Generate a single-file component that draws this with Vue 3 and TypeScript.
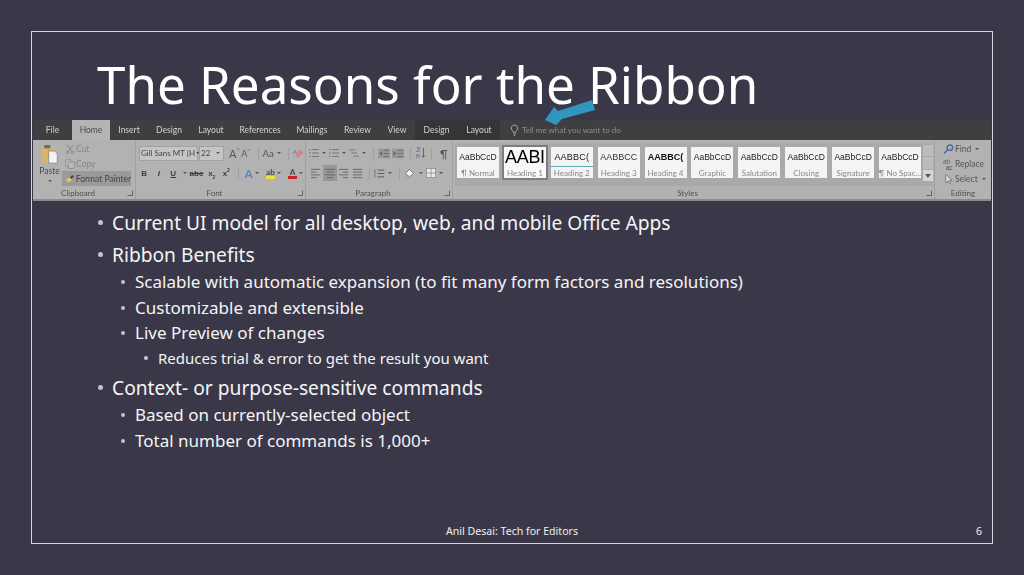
<script setup lang="ts">
const tabs = [
  { t: 'File', w: 39, cls: '' },
  { t: 'Home', w: 38, cls: 'active' },
  { t: 'Insert', w: 38, cls: '' },
  { t: 'Design', w: 42, cls: '' },
  { t: 'Layout', w: 42, cls: '' },
  { t: 'References', w: 56, cls: '' },
  { t: 'Mailings', w: 48, cls: '' },
  { t: 'Review', w: 43, cls: '' },
  { t: 'View', w: 36, cls: '' },
  { t: 'Design', w: 43, cls: 'ctx' },
  { t: 'Layout', w: 42, cls: 'ctx' },
]
const styles = [
  { s: 'AaBbCcD', l: '¶ Normal', c: 'n' },
  { s: 'AABI', l: 'Heading 1', c: 'h1' },
  { s: 'AABBC(', l: 'Heading 2', c: 'h2' },
  { s: 'AABBCC', l: 'Heading 3', c: 'h3' },
  { s: 'AABBC(', l: 'Heading 4', c: 'h4' },
  { s: 'AaBbCcD', l: 'Graphic', c: 'n' },
  { s: 'AaBbCcD', l: 'Salutation', c: 'n' },
  { s: 'AaBbCcD', l: 'Closing', c: 'n' },
  { s: 'AaBbCcD', l: 'Signature', c: 'n' },
  { s: 'AaBbCcD', l: '¶ No Spac...', c: 'n' },
]
const items = [
  { t: 'Current UI model for all desktop, web, and mobile Office Apps', l: 1 },
  { t: 'Ribbon Benefits', l: 1 },
  { t: 'Scalable with automatic expansion (to fit many form factors and resolutions)', l: 2 },
  { t: 'Customizable and extensible', l: 2 },
  { t: 'Live Preview of changes', l: 2 },
  { t: 'Reduces trial & error to get the result you want', l: 3 },
  { t: 'Context- or purpose-sensitive commands', l: 1 },
  { t: 'Based on currently-selected object', l: 2 },
  { t: 'Total number of commands is 1,000+', l: 2 },
]
const aligns = [
  'M1 2h10M1 5h6M1 8h10M1 11h6',
  'M1 2h11M3 5h7M1 8h11M3 11h7',
  'M1 2h10M5 5h6M1 8h10M5 11h6',
  'M1 2h10M1 5h10M1 8h10M1 11h10',
]
</script>

<template>
  <div class="slide">
    <div class="frame">
      <h1 class="title">The Reasons for the Ribbon</h1>
      <div class="ribbon">
        <div class="tabs">
          <span v-for="(x, i) in tabs" :key="i" class="tab" :class="x.cls" :style="{ width: x.w + 'px' }">{{ x.t }}</span>
          <span class="tell">
            <svg width="9" height="12" viewBox="0 0 9 12" fill="none" stroke="#a8a8a8" stroke-width="1"><path d="M4.500 1a3.200 3.200 0 0 0-2 5.700c.5.500.6 1 .6 1.600h2.800c0-.6.100-1.100.6-1.600a3.200 3.200 0 0 0-2-5.700zM3.300 10h2.400M3.800 11.300h1.400" /></svg>
            Tell me what you want to do
          </span>
        </div>
        <div class="body">
          <section class="group clip">
            <div class="gmain clipmain">
              <div class="paste">
                <svg width="19" height="21" viewBox="0 0 22 24">
                  <rect x="1" y="3" width="15" height="19" rx="1" fill="#d9b36a" />
                  <rect x="5" y="1" width="7" height="4" fill="#6e6e6e" />
                  <path d="M10 8h7l3 3v11H10z" fill="#f4f4f4" stroke="#777" stroke-width=".8" />
                </svg>
                <span>Paste</span>
                <i class="caret"></i>
              </div>
              <div class="cliprows">
                <div class="crow dim">
                  <svg width="10" height="12" viewBox="0 0 12 12" fill="none" stroke="#808080" stroke-width="1.100"><path d="M2 1l6 7M10 1L4 8" /><circle cx="3" cy="10" r="1.500" /><circle cx="9" cy="10" r="1.500" /></svg>
                  Cut
                </div>
                <div class="crow dim">
                  <svg width="10" height="12" viewBox="0 0 12 12" fill="#bbb" stroke="#808080" stroke-width=".8"><rect x="1" y="1" width="6" height="8" /><rect x="4.500" y="3.500" width="6.500" height="8" /></svg>
                  Copy
                </div>
                <div class="crow fp">
                  <svg width="10" height="12" viewBox="0 0 12 12"><path d="M1 7l5-3 3 3-5 4z" fill="#e0c070" /><path d="M6 4l3-3 2 2-3 3z" fill="#444" /></svg>
                  Format Painter
                </div>
              </div>
            </div>
            <div class="glabel">Clipboard<i class="launch"></i></div>
          </section>

          <section class="group font">
            <div class="gmain rows">
              <div class="frow">
                <span class="combo fname">Gill Sans MT (H<i class="caret"></i></span>
                <span class="combo fsize">22<i class="caret"></i></span>
                <span class="gly big">A<sup>^</sup></span>
                <span class="gly mid">A<sup>˅</sup></span>
                <i class="sep"></i>
                <span class="gly aa">Aa<i class="caret"></i></span>
                <i class="sep"></i>
                <svg width="14" height="13" viewBox="0 0 14 13"><path d="M3 9L8 2l4 3-5 6H4z" fill="#d9808a" /><text x="0" y="7" font-size="7" fill="#5b6f9c" font-family="Liberation Sans">A</text></svg>
              </div>
              <div class="frow second">
                <b class="fmt">B</b><em class="fmt">I</em><u class="fmt">U</u><i class="caret"></i>
                <s class="fmt abc">abc</s>
                <span class="fmt">x<sub>2</sub></span>
                <span class="fmt">x<sup>2</sup></span>
                <i class="sep"></i>
                <span class="gly effect">A</span><i class="caret"></i>
                <span class="hl yellow">ab</span><i class="caret"></i>
                <span class="hl red">A</span><i class="caret"></i>
              </div>
            </div>
            <div class="glabel">Font<i class="launch"></i></div>
          </section>

          <section class="group para">
            <div class="gmain rows">
              <div class="frow p1">
                <svg width="10" height="12" viewBox="0 0 13 13" stroke="#5a6f9a" fill="none" stroke-width="1.300"><path d="M4 2h9M4 6.500h9M4 11h9" stroke="#777" /><path d="M0 2h2M0 6.500h2M0 11h2" /></svg><i class="caret"></i>
                <svg width="10" height="12" viewBox="0 0 13 13" stroke="#5a6f9a" fill="none" stroke-width="1.300"><path d="M4 2h9M4 6.500h9M4 11h9" stroke="#777" /><path d="M0 2h2M0 6.500h2M0 11h2" /></svg><i class="caret"></i>
                <svg width="10" height="12" viewBox="0 0 14 13" stroke="#777" fill="none" stroke-width="1.300"><path d="M0 2h9M3 6.500h8M6 11h8" /></svg><i class="caret"></i>
                <i class="sep"></i>
                <svg class="ind" width="12" height="11" viewBox="0 0 15 12"><rect width="15" height="12" fill="#999" /><path d="M7 2h7M7 6h7M7 10h7" stroke="#666" /><path d="M5 3L2 6l3 3z" fill="#45639a" /></svg>
                <svg class="ind" width="12" height="11" viewBox="0 0 15 12"><rect width="15" height="12" fill="#999" /><path d="M7 2h7M7 6h7M7 10h7" stroke="#666" /><path d="M2 3l3 3-3 3z" fill="#45639a" /></svg>
                <i class="sep"></i>
                <svg width="11" height="14" viewBox="0 0 13 14" fill="none" stroke="#555" stroke-width="1"><path d="M10 1v11M8 10l2 2 2-2" /><path d="M2 1h4l-4 4h4M2 13V9h3v4" stroke="#5a6f9a" /></svg>
                <i class="sep wide"></i>
                <span class="pil">¶</span>
              </div>
              <div class="frow p2">
                <span v-for="(d, i) in aligns" :key="i" class="al" :class="{ on: i === 1 }">
                  <svg width="12" height="13" viewBox="0 0 13 13" fill="none" stroke="#666" stroke-width="1"><path :d="d" /></svg>
                </span>
                <i class="sep"></i>
                <svg width="12" height="13" viewBox="0 0 16 13" fill="none" stroke="#555" stroke-width="1.200"><path d="M6 2h9M6 6.500h9M6 11h9" /><path d="M2.500 1v11" stroke="#5a6f9a" /></svg><i class="caret"></i>
                <i class="sep"></i>
                <svg width="13" height="13" viewBox="0 0 16 14"><path d="M3 7l5-5 5 5-5 4z" fill="#f2f2f2" stroke="#666" /><path d="M1 12h9" stroke="#a8a8a8" stroke-width="2" /></svg><i class="caret"></i>
                <svg width="10" height="10" viewBox="0 0 13 13" fill="#e9e9e9" stroke="#8a8a8a"><rect x=".5" y=".5" width="12" height="12" /><path d="M6.500 .5v12M.5 6.500h12" /></svg><i class="caret"></i>
              </div>
            </div>
            <div class="glabel">Paragraph<i class="launch"></i></div>
          </section>

          <section class="group stylesg">
            <div class="gallery">
              <div v-for="(s, i) in styles" :key="i" class="card" :class="{ sel: s.c === 'h1' }">
                <span class="sample" :class="s.c">{{ s.s }}</span>
                <span class="clabel">{{ s.l }}</span>
              </div>
              <div class="scroller">
                <span></span><span></span><span class="more"></span>
              </div>
            </div>
            <div class="glabel">Styles<i class="launch"></i></div>
          </section>

          <section class="group edit">
            <div class="gmain erows">
              <div class="erow">
                <svg width="11" height="12" viewBox="0 0 12 12" fill="none" stroke="#3e66a8" stroke-width="1.500"><circle cx="7.500" cy="4.500" r="3" /><path d="M5 7l-4 4" /></svg>
                Find<i class="caret"></i>
              </div>
              <div class="erow">
                <svg width="11" height="12" viewBox="0 0 12 12"><text x="0" y="6" font-size="7" fill="#3e66a8" font-family="Liberation Sans">ab</text><text x="3" y="12" font-size="7" fill="#555" font-family="Liberation Sans">ac</text></svg>
                Replace
              </div>
              <div class="erow">
                <svg width="11" height="12" viewBox="0 0 12 12" fill="#ddd" stroke="#666" stroke-width=".8"><path d="M3 1v9l2.500-2 1.500 3 1.500-.8L7 7.400h3z" /></svg>
                Select<i class="caret"></i>
              </div>
            </div>
            <div class="glabel editl">Editing</div>
          </section>
        </div>
      </div>

      <ul class="bullets">
        <li v-for="(it, i) in items" :key="i" :class="'lv' + it.l">{{ it.t }}</li>
      </ul>

      <footer class="foot">
        <span></span>
        <span class="center">Anil Desai: Tech for Editors</span>
        <span class="num">6</span>
      </footer>

      <svg class="arrow" width="52" height="26" viewBox="0 0 52 26">
        <path d="M0 20L9 7l4 4L47 0l3 10-33 9-6 6z" fill="#2f97bd" />
      </svg>
    </div>
  </div>
</template>

<style>
html, body { margin: 0; background: #3a3848; }
</style>

<style scoped>
.slide {
  width: 1024px;
  height: 575px;
  box-sizing: border-box;
  padding: 31px;
  background: #3a3848;
  font-family: "Noto Sans", "Open Sans", sans-serif;
  color: #fff;
  overflow: hidden;
}
.frame {
  position: relative;
  height: 513px;
  box-sizing: border-box;
  border: 1px solid #d6d6da;
  display: flex;
  flex-direction: column;
}
.title {
  margin: 0;
  height: 88px;
  padding: 17px 0 0 65px;
  box-sizing: border-box;
  font-size: 51.100px;
  line-height: 70px;
  font-weight: 400;
  white-space: nowrap;
}
.ribbon {
  margin: 0 0 0 1px;
  width: 958px;
  height: 81px;
  font-family: Lato, "Open Sans", sans-serif;
  color: #4a4a4a;
  filter: blur(0.4px);
  display: flex;
  flex-direction: column;
  overflow: hidden;
  flex: none;
}
.tabs {
  height: 20px;
  background: #3f3f41;
  display: flex;
  align-items: center;
  font-size: 8.500px;
  color: #d2d2d2;
}
.tab {
  height: 20px;
  line-height: 21px;
  text-align: center;
  flex: none;
}
.tab.active {
  background: #b4b4b4;
  color: #4c4c4c;
}
.tab.ctx {
  background: #353537;
}
.tell {
  margin-left: 10px;
  display: flex;
  align-items: center;
  gap: 3px;
  font-size: 8px;
  color: #8d8d8d;
}
.body {
  height: 61px;
  box-sizing: border-box;
  background: #b2b2b2;
  border-bottom: 2px solid #8c8c8c;
  display: flex;
}
.group {
  position: relative;
  box-sizing: border-box;
  border-right: 1px solid #a0a0a0;
  flex: none;
  display: flex;
  flex-direction: column;
}
.clip { width: 103px; }
.font { width: 170px; }
.para { width: 147px; }
.stylesg { width: 482px; }
.edit { width: 56px; border-right: 0; }
.gmain { flex: 1; min-height: 0; }
.glabel {
  position: relative;
  height: 13px;
  line-height: 14px;
  font-size: 8px;
  text-align: center;
  color: #4f4f4f;
  padding-right: 12px;
  box-sizing: border-box;
}
.editl { padding-right: 0; }
.launch {
  position: absolute;
  right: 2px;
  top: 4px;
  width: 4px;
  height: 4px;
  border: 1px solid #666;
  border-top-color: transparent;
  border-left-color: transparent;
}
.caret {
  display: inline-block;
  width: 0;
  height: 0;
  border: 2px solid transparent;
  border-top: 2.500px solid #555;
  border-bottom: 0;
  margin: 0 3px;
  flex: none;
}
.clipmain {
  display: flex;
  padding: 1px 0 0 7px;
}
.paste {
  width: 19px;
  padding-top: 3px;
  display: flex;
  flex-direction: column;
  align-items: center;
  font-size: 8.500px;
  line-height: 10px;
  gap: 1px;
}
.paste .caret { margin-top: 3px; }
.cliprows {
  display: flex;
  flex-direction: column;
  margin-left: 3px;
}
.crow {
  width: 69px;
  box-sizing: border-box;
  height: 15px;
  display: flex;
  align-items: center;
  gap: 1px;
  padding: 0 0 0 3px;
  font-size: 8.500px;
  white-space: nowrap;
}
.dim { color: #858585; }
.fp { background: #9a9a9a; color: #444; }
.rows {
  display: flex;
  flex-direction: column;
  padding: 5px 0 0 3px;
  gap: 4px;
}
.frow {
  height: 16px;
  display: flex;
  align-items: center;
  white-space: nowrap;
}
.combo {
  box-sizing: border-box;
  height: 15px;
  background: #c5c5c5;
  border: 1px solid #a2a2a2;
  display: flex;
  align-items: center;
  justify-content: space-between;
  padding-left: 1px;
  font-size: 8px;
  color: #444;
}
.fname { width: 59px; margin-right: 1px; }
.fname .caret { margin: 0 1px; }
.fsize { width: 28px; margin-right: 5px; }
.gly { color: #555; font-size: 11px; display: flex; align-items: center; }
.big { width: 14px; font-size: 11px; }
.mid { width: 14px; font-size: 9px; }
.gly sup { font-size: 6px; line-height: 6px; align-self: flex-start; color: #3e66a8; }
.sep {
  width: 1px;
  height: 13px;
  margin: 0 4px;
  background: #a0a0a0;
  flex: none;
}
.sep.wide { margin: 0 8px 0 5px; }
.aa { font-size: 9.500px; }
.second { margin-left: -2px; }
.fmt {
  width: 14.500px;
  text-align: center;
  font-size: 8px;
  color: #3f3f3f;
  font-family: "Liberation Sans", sans-serif;
  font-weight: 700;
  flex: none;
}
.fmt sub, .fmt sup { font-size: 5px; line-height: 0; }
.abc { width: 16px; }
.second .caret { margin: 0 2px; }
.effect { color: #5b86c4; font-size: 12px; font-weight: 700; margin-left: 2px; }
.hl {
  display: inline-block;
  width: 11px;
  height: 11px;
  margin-left: 5px;
  font-size: 8px;
  line-height: 9px;
  text-align: center;
  font-weight: 700;
  color: #444;
  box-sizing: border-box;
}
.yellow { border-bottom: 3px solid #e8e23a; }
.red { border-bottom: 3px solid #c82222; }
.p1 .caret { margin: 0 3px; }
.ind { margin-right: 2px; }
.pil { font-size: 11px; color: #555; }
.p2 { padding-left: 0; }
.al {
  width: 14px;
  height: 16px;
  display: flex;
  align-items: center;
  justify-content: center;
  flex: none;
}
.al.on { background: #979797; }
.p2 .caret { margin: 0 3px; }
.p2 .sep { margin: 0 3px 0 4px; }
.gallery {
  position: relative;
  flex: 1;
  box-sizing: border-box;
  margin: 3px 1px 0 2px;
  padding: 4px 0 0 2px;
  background: #a9a9a9;
  display: flex;
  gap: 4.900px;
}
.card {
  box-sizing: border-box;
  width: 42px;
  height: 31px;
  background: #f4f4f4;
  display: flex;
  flex-direction: column;
  align-items: center;
  overflow: hidden;
  flex: none;
}
.card.sel {
  outline: 2px solid #7d7d7d;
  background: #f8f8f8;
}
.sample {
  height: 20px;
  line-height: 20px;
  font-family: "Liberation Sans", sans-serif;
  color: #202020;
  white-space: nowrap;
  width: 100%;
  overflow: hidden;
  text-align: center;
  box-sizing: border-box;
  flex: none;
}
.sample.n { font-size: 8.500px; }
.sample.h1 { font-size: 18px; color: #000; letter-spacing: -.3px; }
.sample.h2 { font-size: 9px; letter-spacing: .2px; color: #111; border-bottom: 1px solid #5fa8b8; }
.sample.h3 { font-size: 9px; color: #333; }
.sample.h4 { font-size: 9px; font-weight: 700; color: #111; }
.clabel {
  font-size: 8px;
  line-height: 12px;
  color: #888;
  white-space: nowrap;
}
.scroller {
  width: 10px;
  height: 36px;
  margin: -2px 0 0 -3px;
  display: flex;
  flex-direction: column;
  gap: 1px;
  flex: none;
}
.scroller span { flex: 1; background: #bcbcbc; }
.scroller .more { background: #d6d6d6; position: relative; }
.scroller .more::after {
  content: "";
  position: absolute;
  left: 2px;
  top: 4px;
  border: 3px solid transparent;
  border-top: 4px solid #555;
  border-bottom: 0;
}
.erows {
  padding: 1px 0 0 8px;
  display: flex;
  flex-direction: column;
}
.erow {
  height: 15px;
  display: flex;
  align-items: center;
  gap: 1px;
  font-size: 8.500px;
  color: #555;
  white-space: nowrap;
}
.bullets {
  list-style: none;
  margin: 0;
  padding: 3px 0 0;
  color: #f4f4f6;
}
.bullets li {
  position: relative;
  white-space: nowrap;
}
.bullets li::before {
  content: "";
  position: absolute;
  border-radius: 50%;
  background: #b7c9d3;
}
.lv1 {
  padding-left: 80px;
  font-size: 19.200px;
  line-height: 26px;
  margin: 6px 0 0;
}
.lv1::before { left: 66px; top: 10px; width: 5px; height: 5px; }
.lv2 {
  padding-left: 103px;
  font-size: 17px;
  line-height: 24px;
  margin: 1.500px 0 0;
}
.lv1 + .lv2 { margin-top: 2px; }
.lv2::before { left: 89px; top: 10px; width: 4px; height: 4px; }
.lv3 {
  padding-left: 126px;
  font-size: 15px;
  line-height: 24px;
  margin: 1px 0 0;
}
.lv3::before { left: 112px; top: 10px; width: 3.500px; height: 3.500px; }
.lv3 + .lv1 { margin-top: 5px; }
.foot {
  margin-top: auto;
  height: 25px;
  display: grid;
  grid-template-columns: 1fr 200px 1fr;
  align-items: center;
  font-size: 10.600px;
  color: #f0f0f0;
}
.center { text-align: center; }
.num { text-align: right; padding-right: 10px; }
.arrow {
  position: absolute;
  left: 513px;
  top: 68px;
}
</style>
